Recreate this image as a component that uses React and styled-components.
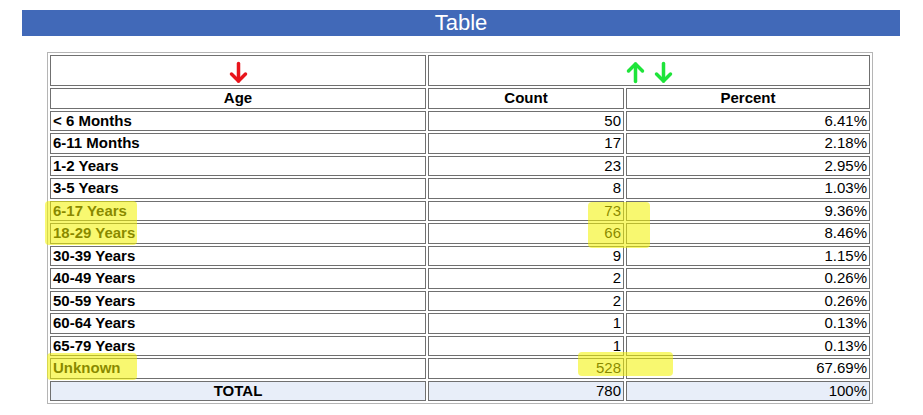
import React from 'react';
import styled, { createGlobalStyle } from 'styled-components';

const GlobalStyle = createGlobalStyle`
  body {
    margin: 0;
    background: #fff;
    font-family: "Liberation Sans", Arial, sans-serif;
  }
`;

const Page = styled.div`
  position: relative;
  width: 923px;
  height: 415px;
  padding-top: 10px;
  box-sizing: border-box;
`;

const TitleBar = styled.div`
  margin: 0 23px 0 22px;
  height: 26px;
  background: #4169b8;
  color: #fff;
  font-size: 22px;
  line-height: 26px;
  text-align: center;
`;

const Grid = styled.table`
  margin: 16px 0 0 47px;
  width: 826px;
  table-layout: fixed;
  border-collapse: separate;
  border-spacing: 2px;
  border: 1px solid #b5b5b5;
  font-size: 15px;
  color: #000;
`;

const Cell = styled.td`
  border: 1px solid #707070;
  height: 18.5px;
  padding: 0 2px;
  line-height: 18px;
  white-space: nowrap;
  text-align: ${p => p.$align || 'left'};
  font-weight: ${p => (p.$bold ? 'bold' : 'normal')};
  background: ${p => (p.$total ? '#e8eef9' : '#fff')};
`;

const ArrowCell = styled(Cell)`
  height: 29px;
  text-align: center;
  vertical-align: middle;
`;

const Arrows = styled.div`
  display: flex;
  justify-content: center;
  gap: 9px;
  padding-top: 3px;
`;

const Marker = styled.div`
  position: absolute;
  background: rgba(242, 242, 0, 0.56);
  border-radius: 4px;
  pointer-events: none;
`;

const Arrow = ({ color, up }) => (
  <svg width="19" height="23" viewBox="0 0 19 23">
    <g
      fill="none"
      stroke={color}
      strokeWidth="3.5"
      strokeLinecap="round"
      strokeLinejoin="round"
      transform={up ? 'rotate(180 9.5 11.5)' : undefined}
    >
      <path d="M9.5 2.5 L9.5 20" />
      <path d="M2.5 13 L9.5 20 L16.5 13" />
    </g>
  </svg>
);

const rows = [
  ['< 6 Months', 50, '6.41%'],
  ['6-11 Months', 17, '2.18%'],
  ['1-2 Years', 23, '2.95%'],
  ['3-5 Years', 8, '1.03%'],
  ['6-17 Years', 73, '9.36%'],
  ['18-29 Years', 66, '8.46%'],
  ['30-39 Years', 9, '1.15%'],
  ['40-49 Years', 2, '0.26%'],
  ['50-59 Years', 2, '0.26%'],
  ['60-64 Years', 1, '0.13%'],
  ['65-79 Years', 1, '0.13%'],
  ['Unknown', 528, '67.69%'],
];

const markers = [
  { left: 45, top: 201, width: 92, height: 44 },
  { left: 588, top: 202, width: 62, height: 46 },
  { left: 47, top: 353, width: 90, height: 27 },
  { left: 578, top: 352, width: 95, height: 24 },
];

export default function App() {
  return (
    <Page>
      <GlobalStyle />
      <TitleBar>Table</TitleBar>
      <Grid>
        <colgroup>
          <col style={{ width: 376 }} />
          <col style={{ width: 196 }} />
          <col />
        </colgroup>
        <tbody>
          <tr>
            <ArrowCell>
              <Arrows>
                <Arrow color="#e8141c" />
              </Arrows>
            </ArrowCell>
            <ArrowCell colSpan={2}>
              <Arrows>
                <Arrow color="#1ee43a" up />
                <Arrow color="#1ee43a" />
              </Arrows>
            </ArrowCell>
          </tr>
          <tr>
            <Cell $bold $align="center">Age</Cell>
            <Cell $bold $align="center">Count</Cell>
            <Cell $bold $align="center">Percent</Cell>
          </tr>
          {rows.map(([label, count, pct]) => (
            <tr key={label}>
              <Cell $bold>{label}</Cell>
              <Cell $align="right">{count}</Cell>
              <Cell $align="right">{pct}</Cell>
            </tr>
          ))}
          <tr>
            <Cell $bold $total $align="center">TOTAL</Cell>
            <Cell $total $align="right">780</Cell>
            <Cell $total $align="right">100%</Cell>
          </tr>
        </tbody>
      </Grid>
      {markers.map((m, i) => (
        <Marker key={i} style={m} />
      ))}
    </Page>
  );
}
